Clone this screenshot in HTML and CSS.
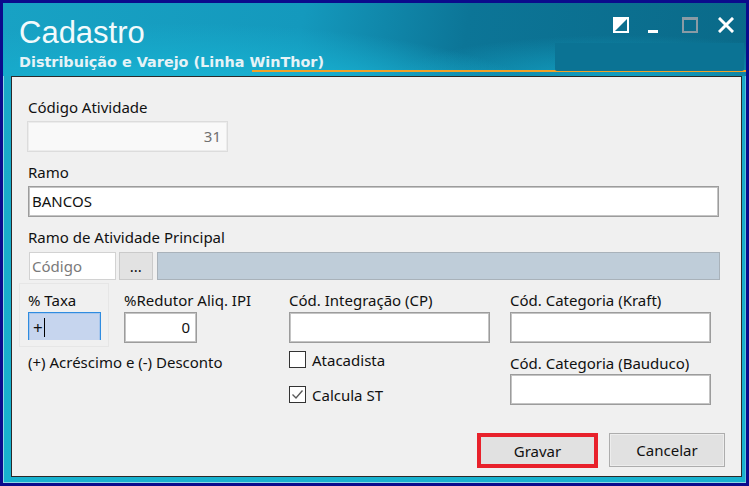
FILE: index.html
```html
<!DOCTYPE html>
<html lang="pt-BR">
<head>
    <meta charset="UTF-8">
    <title>Cadastro</title>
    <link rel="stylesheet" href="styles.css">
</head>
<body>
    <div class="window">
        <!-- Title bar -->
        <div class="titlebar">
            <div class="titles">
                <h1 class="title">Cadastro</h1>
                <div class="subtitle">Distribuição e Varejo (Linha WinThor)</div>
            </div>
            <div class="titlebar-right">
                <div class="controls">
                    <svg class="ctl ctl-theme" width="16" height="16" viewBox="0 0 16 16">
                        <rect x="0" y="0" width="16" height="16" fill="#fff"/>
                        <polygon points="14,2 14,14 2,14" fill="#0d6f8e"/>
                    </svg>
                    <svg class="ctl ctl-min" width="16" height="16" viewBox="0 0 16 16">
                        <rect x="3" y="13" width="10" height="3" fill="#fff"/>
                    </svg>
                    <svg class="ctl ctl-max" width="16" height="16" viewBox="0 0 16 16">
                        <rect x="1" y="1" width="14" height="14" fill="none" stroke="#8a9ba5" stroke-width="2"/>
                        <rect x="1" y="1" width="14" height="2" fill="#8a9ba5"/>
                    </svg>
                    <svg class="ctl ctl-close" width="16" height="16" viewBox="0 0 16 16">
                        <path d="M2 2 L14 14 M14 2 L2 14" stroke="#fff" stroke-width="3" stroke-linecap="square"/>
                    </svg>
                </div>
                <div class="tab-slot"></div>
            </div>
        </div>

        <!-- Form -->
        <div class="panel">
            <div class="field">
                <label class="lbl">Código Atividade</label>
                <div class="input input-disabled input-code">31</div>
            </div>

            <div class="field field-ramo">
                <label class="lbl">Ramo</label>
                <div class="input input-ramo">BANCOS</div>
            </div>

            <div class="field field-principal">
                <label class="lbl">Ramo de Atividade Principal</label>
                <div class="lookup">
                    <div class="lookup-code">Código</div>
                    <div class="lookup-btn">...</div>
                    <div class="lookup-desc"></div>
                </div>
            </div>

            <div class="grid">
                <div class="groupbox">
                    <label class="lbl">% Taxa</label>
                    <div class="taxa-clip">
                        <div class="input input-taxa">+<span class="caret"></span></div>
                    </div>
                </div>

                <div class="col">
                    <label class="lbl">%Redutor Aliq. IPI</label>
                    <div class="input input-small">0</div>
                </div>

                <div class="col col-tall">
                    <label class="lbl">Cód. Integração (CP)</label>
                    <div class="input input-wide"></div>
                    <div class="check check-first">
                        <span class="box"></span>
                        <span>Atacadista</span>
                    </div>
                    <div class="check check-second">
                        <span class="box">
                            <svg width="15" height="15" viewBox="0 0 15 15">
                                <path d="M2.5 7.5 L6 11 L12.5 3.5" fill="none" stroke="#5a5a5a" stroke-width="1.4"/>
                            </svg>
                        </span>
                        <span>Calcula ST</span>
                    </div>
                </div>

                <div class="col col-tall">
                    <label class="lbl">Cód. Categoria (Kraft)</label>
                    <div class="input input-wide"></div>
                    <label class="lbl lbl-bauduco">Cód. Categoria (Bauduco)</label>
                    <div class="input input-wide input-bauduco"></div>
                </div>

                <div class="note">(+) Acréscimo e (-) Desconto</div>
            </div>

            <div class="buttons">
                <button class="btn btn-save">Gravar</button>
                <button class="btn btn-cancel">Cancelar</button>
            </div>
        </div>
    </div>
</body>
</html>
```

FILE: styles.css
```css
* {
    box-sizing: border-box;
}
body {
    margin: 0;
    background-color: #0b0b8c;
    font-family: "Noto Sans", "Open Sans", sans-serif;
    font-size: 15px;
    color: #111;
}
.window {
    width: 749px;
    height: 486px;
    border: 3px solid #0b0b8c;
    background: linear-gradient(to bottom, #1aa6c6, #18b2cf);
    box-shadow: inset 1px 0 0 #8fd6e4, inset 0 -1px 0 #8fd6e4, inset -1px 0 0 #5cc4da;
    padding: 0 4px 7px 8px;
}

/* title bar */
.titlebar {
    display: flex;
    justify-content: space-between;
    height: 73px;
    margin: 0 -4px 0 -8px;
    background:
        linear-gradient(to right, transparent 249px, #f2a126 249px) 0 67px / 100% 2px no-repeat,
        radial-gradient(ellipse 520px 120px at 170px 110px, #22c0de 0%, #17aacb 45%, rgba(20,160,195,0) 75%),
        radial-gradient(ellipse 300px 60px at 620px 80px, #14a6c8 0%, rgba(20,160,195,0) 80%),
        linear-gradient(100deg, #18a2c4 0%, #1499bd 40%, #0c7597 62%, #0a6a89 100%);
}
.titles {
    padding: 14px 0 0 16px;
    color: #f2fafc;
}
.title {
    margin: 0;
    font-family: "Liberation Sans", Arial, sans-serif;
    font-weight: normal;
    font-size: 31px;
    line-height: 31px;
}
.subtitle {
    margin-top: 6px;
    font-family: "DejaVu Sans", Verdana, sans-serif;
    font-weight: bold;
    font-size: 14.4px;
    line-height: 16px;
    color: #e6f3f7;
}
.titlebar-right {
    width: 189px;
    margin-right: 2px;
    display: flex;
    flex-direction: column;
}
.controls {
    display: flex;
    align-items: flex-start;
    height: 40px;
    padding-top: 14px;
    padding-left: 58px;
}
.ctl {
    display: block;
    flex: none;
}
.ctl-min {
    margin-left: 16px;
}
.ctl-max {
    margin-left: 21px;
}
.ctl-close {
    margin-left: 20px;
}
.tab-slot {
    height: 28px;
    background-color: #0b7394;
    border-radius: 0 0 2px 2px;
}

/* form panel */
.panel {
    height: 401px;
    background-color: #f0f0f0;
    border: 1px solid #2a2a2a;
    padding: 21px 21px 0 16px;
}
.field {
    display: flex;
    flex-direction: column;
}
.lbl {
    display: block;
    line-height: 18px;
    white-space: nowrap;
}
.input {
    height: 31px;
    margin-top: 5px;
    background-color: #fff;
    border: 1px solid #9c9c9c;
    box-shadow: inset 0 0 0 1px #c4c4c4;
    line-height: 29px;
    padding: 0 4px;
    white-space: nowrap;
}
.input-code {
    width: 201px;
    margin-left: -1px;
    text-align: right;
    padding-right: 6px;
}
.input-disabled {
    background-color: #f9f9f9;
    border-color: #dcdcdc;
    box-shadow: inset 0 0 0 1px #ececec;
    color: #707070;
}
.field-ramo {
    margin-top: 11px;
}
.input-ramo {
    width: 691px;
    padding-left: 3px;
}
.field-principal {
    margin-top: 11px;
}
.lookup {
    display: flex;
    height: 28px;
    margin-top: 6px;
}
.lookup-code {
    width: 87px;
    margin-left: 1px;
    background-color: #fff;
    border: 1px solid #d2d2d2;
    color: #7a7a7a;
    line-height: 26px;
    padding-left: 2px;
}
.lookup-btn {
    width: 34px;
    margin-left: 3px;
    background-color: #e2e2e2;
    border: 1px solid #cacaca;
    text-align: center;
    line-height: 26px;
}
.lookup-desc {
    width: 564px;
    margin-left: 4px;
    background-color: #bfcdd9;
    border: 1px solid #a9b2ba;
}

/* lower grid */
.grid {
    display: grid;
    grid-template-columns: 90px 150px 206px 202px;
    grid-template-rows: 64px auto;
    column-gap: 15px;
    margin: 3px 0 0 -9px;
    align-items: start;
}
.groupbox {
    height: 64px;
    border: 1px solid #e6e6e6;
    padding: 7px 0 0 8px;
}
.taxa-clip {
    height: 28px;
    margin-top: 3px;
    width: 73px;
    overflow: hidden;
}
.input-taxa {
    margin-top: 0;
    background-color: #c6d5ee;
    border: 1px solid #2f8ce0;
    box-shadow: inset 0 0 0 1px #a7c6ec;
    padding-left: 4px;
    font-size: 17px;
}
.caret {
    display: inline-block;
    width: 1px;
    height: 19px;
    margin-left: 1px;
    vertical-align: -3px;
    background-color: #000;
}
.col {
    padding-top: 8px;
}
.col .input {
    margin-top: 3px;
}
.col-tall {
    grid-row: 1 / span 2;
}
.input-small {
    width: 73px;
    text-align: right;
    padding-right: 6px;
}
.input-wide {
    width: 201px;
}
.col .input-bauduco {
    margin-top: 2px;
}
.lbl-bauduco {
    margin-top: 11px;
}
.note {
    grid-column: 1 / span 2;
    grid-row: 2;
    margin: 6px 0 0 9px;
    line-height: 18px;
}
.check {
    display: flex;
    align-items: center;
    gap: 6px;
    height: 17px;
}
.check-first {
    margin-top: 8px;
}
.check-second {
    margin-top: 18px;
}
.box {
    width: 17px;
    height: 17px;
    background-color: #fff;
    border: 1px solid #333;
    display: flex;
    align-items: center;
    justify-content: center;
}

/* buttons */
.buttons {
    display: flex;
    justify-content: flex-end;
    align-items: flex-start;
    gap: 11px;
    margin-top: 28px;
    margin-right: -5px;
}
.btn {
    font-family: inherit;
    font-size: 15px;
    color: #111;
    background-color: #e1e1e1;
    padding: 0;
}
.btn-save {
    width: 121px;
    height: 35px;
    border: 4px solid #e8212b;
}
.btn-cancel {
    width: 116px;
    height: 34px;
    border: 1px solid #adadad;
    box-shadow: inset 0 0 0 1px #ededed;
}
```
